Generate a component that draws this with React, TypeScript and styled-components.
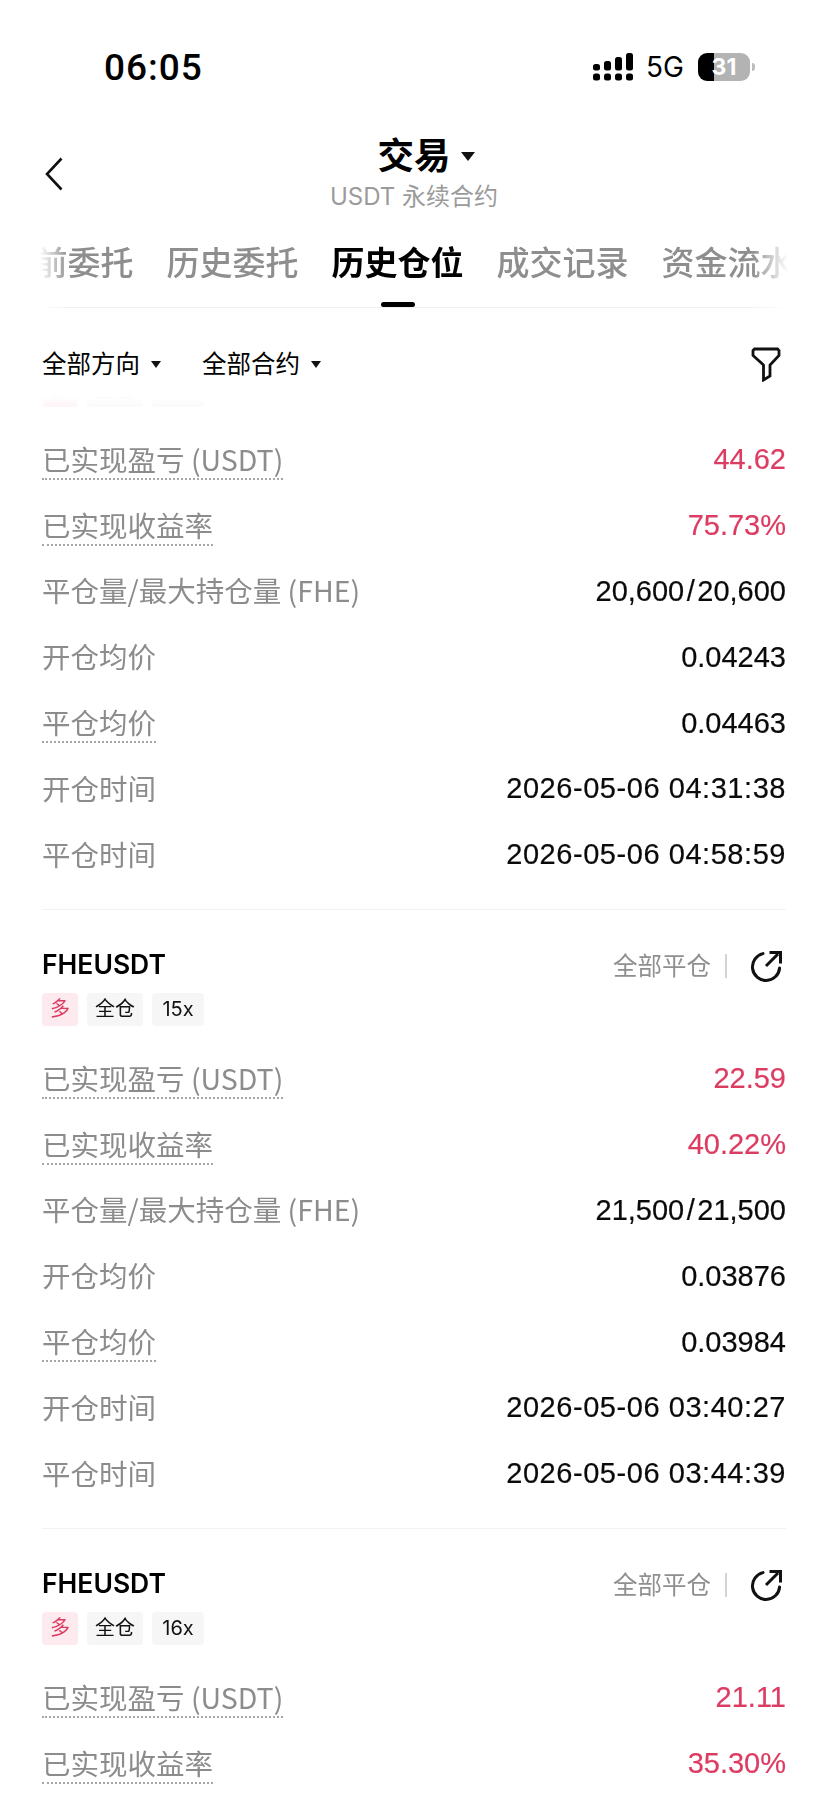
import React from 'react';
import styled, { createGlobalStyle } from 'styled-components';

const FONT = `Inter, "Noto Sans CJK SC", sans-serif`;

interface Position {
  symbol: string;
  leverage: string;
  pnl: string;
  rate: string;
  closed: string;
  maxHeld: string;
  sizeUnit: string;
  openPrice: string;
  closePrice: string;
  openTime: string;
  closeTime: string;
}

const positions: Position[] = [
  {
    symbol: 'FHEUSDT',
    leverage: '20x',
    pnl: '44.62',
    rate: '75.73%',
    closed: '20,600',
    maxHeld: '20,600',
    sizeUnit: 'FHE',
    openPrice: '0.04243',
    closePrice: '0.04463',
    openTime: '2026-05-06 04:31:38',
    closeTime: '2026-05-06 04:58:59',
  },
  {
    symbol: 'FHEUSDT',
    leverage: '15x',
    pnl: '22.59',
    rate: '40.22%',
    closed: '21,500',
    maxHeld: '21,500',
    sizeUnit: 'FHE',
    openPrice: '0.03876',
    closePrice: '0.03984',
    openTime: '2026-05-06 03:40:27',
    closeTime: '2026-05-06 03:44:39',
  },
  {
    symbol: 'FHEUSDT',
    leverage: '16x',
    pnl: '21.11',
    rate: '35.30%',
    closed: '20,000',
    maxHeld: '20,000',
    sizeUnit: 'FHE',
    openPrice: '0.03500',
    closePrice: '0.03577',
    openTime: '2026-05-06 03:10:12',
    closeTime: '2026-05-06 03:20:45',
  },
];

const tabs = ['当前委托', '历史委托', '历史仓位', '成交记录', '资金流水'];

const SignalIcon = () => (
  <svg width="40" height="28" viewBox="0 0 40 28" fill="#000">
    <rect x="0" y="11" width="7" height="6.5" rx="2.5" />
    <rect x="0" y="20.5" width="7" height="7" rx="2.5" />
    <rect x="11" y="8" width="7" height="9.5" rx="2.5" />
    <rect x="11" y="20.5" width="7" height="7" rx="2.5" />
    <rect x="22" y="4" width="7" height="13.5" rx="2.5" />
    <rect x="22" y="20.5" width="7" height="7" rx="2.5" />
    <rect x="33" y="0" width="7" height="17.5" rx="2.5" />
    <rect x="33" y="20.5" width="7" height="7" rx="2.5" />
  </svg>
);

const BackIcon = () => (
  <svg width="20" height="34" viewBox="0 0 20 34" fill="none" stroke="#111" strokeWidth="2.6">
    <path d="M17.5 1.5 3 17l14.5 15.5" />
  </svg>
);

const FilterIcon = () => (
  <svg width="30" height="35" viewBox="0 0 30 35" fill="none" stroke="#111" strokeWidth="2.8" strokeLinejoin="miter">
    <path d="M3.5 2h23l1.5 1.5v5L19 18v11l-6.5 4V18L2 8.5v-5z" />
  </svg>
);

const ShareIcon = () => (
  <svg width="34" height="34" viewBox="0 0 34 34" fill="none" stroke="#111" strokeWidth="3">
    <path d="M14 4.6A13.6 13.6 0 1 0 30.6 19" strokeLinecap="round" />
    <path d="M17 17 29 5" />
    <path d="M20.5 3.5h11v11" />
  </svg>
);

const App = () => (
  <Page>
    <GlobalStyle />
    <StatusBar>
      <Clock>06:05</Clock>
      <StatusIcons>
        <SignalIcon />
        <Network>5G</Network>
        <Battery>31</Battery>
      </StatusIcons>
    </StatusBar>

    <NavBar>
      <BackSlot>
        <BackIcon />
      </BackSlot>
      <NavTitle>
        <Title>交易</Title>
        <Subtitle>USDT 永续合约</Subtitle>
      </NavTitle>
    </NavBar>

    <TabStrip>
      {tabs.map((tab, i) => (
        <Tab key={tab} $active={i === 2}>
          {tab}
        </Tab>
      ))}
    </TabStrip>

    <FilterBar>
      <Dropdowns>
        <Dropdown>全部方向</Dropdown>
        <Dropdown>全部合约</Dropdown>
      </Dropdowns>
      <FilterIcon />
    </FilterBar>

    <Scroller>
      {positions.map((p, i) => (
        <Card key={i}>
          <CardHead>
            <Symbol>{p.symbol}</Symbol>
            <CardActions>
              <CloseType>全部平仓</CloseType>
              <ShareIcon />
            </CardActions>
          </CardHead>
          <Tags>
            <Tag $long>多</Tag>
            <Tag>全仓</Tag>
            <Tag>{p.leverage}</Tag>
          </Tags>
          <Rows>
            <Row>
              <Label $dotted>已实现盈亏 (USDT)</Label>
              <Value $up>{p.pnl}</Value>
            </Row>
            <Row>
              <Label $dotted>已实现收益率</Label>
              <Value $up>{p.rate}</Value>
            </Row>
            <Row>
              <Label>平仓量/最大持仓量 ({p.sizeUnit})</Label>
              <Value>
                {p.closed}
                <Slash>/</Slash>
                {p.maxHeld}
              </Value>
            </Row>
            <Row>
              <Label>开仓均价</Label>
              <Value>{p.openPrice}</Value>
            </Row>
            <Row>
              <Label $dotted>平仓均价</Label>
              <Value>{p.closePrice}</Value>
            </Row>
            <Row>
              <Label>开仓时间</Label>
              <Value $time>{p.openTime}</Value>
            </Row>
            <Row>
              <Label>平仓时间</Label>
              <Value $time>{p.closeTime}</Value>
            </Row>
          </Rows>
        </Card>
      ))}
    </Scroller>
  </Page>
);

export default App;

const GlobalStyle = createGlobalStyle`
  html, body {
    margin: 0;
    padding: 0;
    background: #fff;
  }
`;

const Page = styled.div`
  display: flex;
  flex-direction: column;
  width: 828px;
  height: 1801px;
  overflow: hidden;
  background: #fff;
  color: #000;
  font-family: ${FONT};
`;

const StatusBar = styled.div`
  flex: none;
  display: flex;
  align-items: center;
  justify-content: space-between;
  height: 134px;
  padding: 0 78px 0 104px;
`;

const Clock = styled.div`
  font-family: Roboto, sans-serif;
  font-size: 37px;
  font-weight: 500;
  letter-spacing: 1px;
`;

const StatusIcons = styled.div`
  display: flex;
  align-items: center;
  gap: 13px;
`;

const Network = styled.div`
  font-size: 28px;
  font-weight: 400;
`;

const Battery = styled.div`
  position: relative;
  width: 52px;
  height: 28px;
  margin-left: 1px;
  border-radius: 9px;
  background: linear-gradient(90deg, #000 0 16px, #b3b3b3 16px);
  color: #fff;
  font-size: 23px;
  font-weight: 700;
  line-height: 28px;
  text-align: center;
  &::after {
    content: '';
    position: absolute;
    right: -5px;
    top: 10px;
    width: 3px;
    height: 8px;
    border-radius: 0 3px 3px 0;
    background: #bdbdbd;
  }
`;

const NavBar = styled.div`
  flex: none;
  display: grid;
  grid-template-columns: 1fr auto 1fr;
  padding: 0 42px;
`;

const BackSlot = styled.div`
  display: flex;
  align-items: center;
  padding: 2px 0 0 2px;
`;

const NavTitle = styled.div`
  display: flex;
  flex-direction: column;
  align-items: center;
`;

const Title = styled.div`
  position: relative;
  font-size: 36.5px;
  font-weight: 700;
  line-height: 42px;
  margin-top: 1px;
  &::after {
    content: '';
    position: absolute;
    left: calc(100% + 11px);
    top: 17px;
    border-style: solid;
    border-width: 9px 7px 0;
    border-color: #111 transparent transparent;
  }
`;

const Subtitle = styled.div`
  margin-top: 5px;
  color: #9b9b9b;
  font-size: 24px;
  line-height: 30px;
`;

const TabStrip = styled.div`
  flex: none;
  display: flex;
  gap: 33px;
  height: 96px;
  box-sizing: border-box;
  padding: 29px 0 0 1.5px;
  white-space: nowrap;
  overflow: hidden;
  border-bottom: 1px solid #f1f1f1;
  position: relative;
  mask-image: linear-gradient(90deg, transparent 40px, #000 68px, #000 752px, transparent 788px);
`;

const Tab = styled.div<{ $active?: boolean }>`
  position: relative;
  flex: none;
  height: 66px;
  color: ${p => (p.$active ? '#000' : '#8e8e8e')};
  font-size: 33px;
  font-weight: ${p => (p.$active ? 600 : 500)};
  line-height: 44px;
  &::after {
    content: ${p => (p.$active ? "''" : 'none')};
    position: absolute;
    left: 50%;
    bottom: 0;
    width: 34px;
    height: 5px;
    margin-left: -17px;
    border-radius: 3px;
    background: #000;
  }
`;

const FilterBar = styled.div`
  flex: none;
  display: flex;
  align-items: center;
  justify-content: space-between;
  height: 36px;
  padding: 38px 47px 15px 42px;
`;

const Dropdowns = styled.div`
  display: flex;
  gap: 41px;
`;

const Dropdown = styled.div`
  display: flex;
  align-items: center;
  gap: 11px;
  font-size: 24.5px;
  line-height: 36px;
  &::after {
    content: '';
    border-style: solid;
    border-width: 7px 5.5px 0;
    border-color: #111 transparent transparent;
  }
`;

const Scroller = styled.div`
  flex: 1;
  min-height: 0;
  overflow: hidden;
  padding: 0 42px;
  mask-image: linear-gradient(180deg, transparent 0, #000 18px);
`;

const Card = styled.div`
  height: 619px;
  box-sizing: border-box;
  padding-top: 36px;
  border-top: 1px solid #f2f2f2;
  &:first-child {
    margin-top: -107px;
  }
`;

const CardHead = styled.div`
  display: flex;
  align-items: center;
  justify-content: space-between;
  height: 36px;
`;

const Symbol = styled.div`
  font-size: 26.5px;
  font-weight: 600;
`;

const CardActions = styled.div`
  display: flex;
  align-items: center;
  gap: 20px;
  margin-right: 3px;
  padding-top: 4px;
`;

const CloseType = styled.div`
  padding-right: 16px;
  border-right: 2px solid transparent;
  color: #8f8f8f;
  font-size: 24.5px;
  line-height: 30px;
  position: relative;
  &::after {
    content: '';
    position: absolute;
    right: 0;
    top: 3px;
    width: 2px;
    height: 24px;
    background: #d4d4d4;
  }
`;

const Tags = styled.div`
  display: flex;
  gap: 9px;
  margin-top: 11px;
`;

const Tag = styled.div<{ $long?: boolean }>`
  min-width: ${p => (p.$long ? 36 : 52)}px;
  height: 33px;
  box-sizing: border-box;
  padding: 0 8px;
  border-radius: 4px;
  background: ${p => (p.$long ? '#fdeaee' : '#f6f6f6')};
  color: ${p => (p.$long ? '#dc3c62' : '#111')};
  font-size: 20px;
  line-height: 33px;
  text-align: center;
`;

const Rows = styled.div`
  margin-top: 20px;
`;

const Row = styled.div`
  display: flex;
  align-items: center;
  justify-content: space-between;
  height: 65.8px;
`;

const Label = styled.div<{ $dotted?: boolean }>`
  color: #8c8c8c;
  font-family: "Noto Sans CJK SC", sans-serif;
  font-size: 28.5px;
  font-weight: 400;
  line-height: 38px;
  border-bottom: 2px ${p => (p.$dotted ? 'dotted #a6a6a6' : 'solid transparent')};
`;

const Value = styled.div<{ $up?: boolean; $time?: boolean }>`
  color: ${p => (p.$up ? '#dc3c62' : '#0a0a0a')};
  font-family: "Liberation Sans", sans-serif;
  font-size: 29px;
  letter-spacing: ${p => (p.$time ? 0.55 : 0)}px;
  -webkit-text-stroke: 0.2px currentColor;
`;

const Slash = styled.span`
  margin: 0 2.5px;
`;
